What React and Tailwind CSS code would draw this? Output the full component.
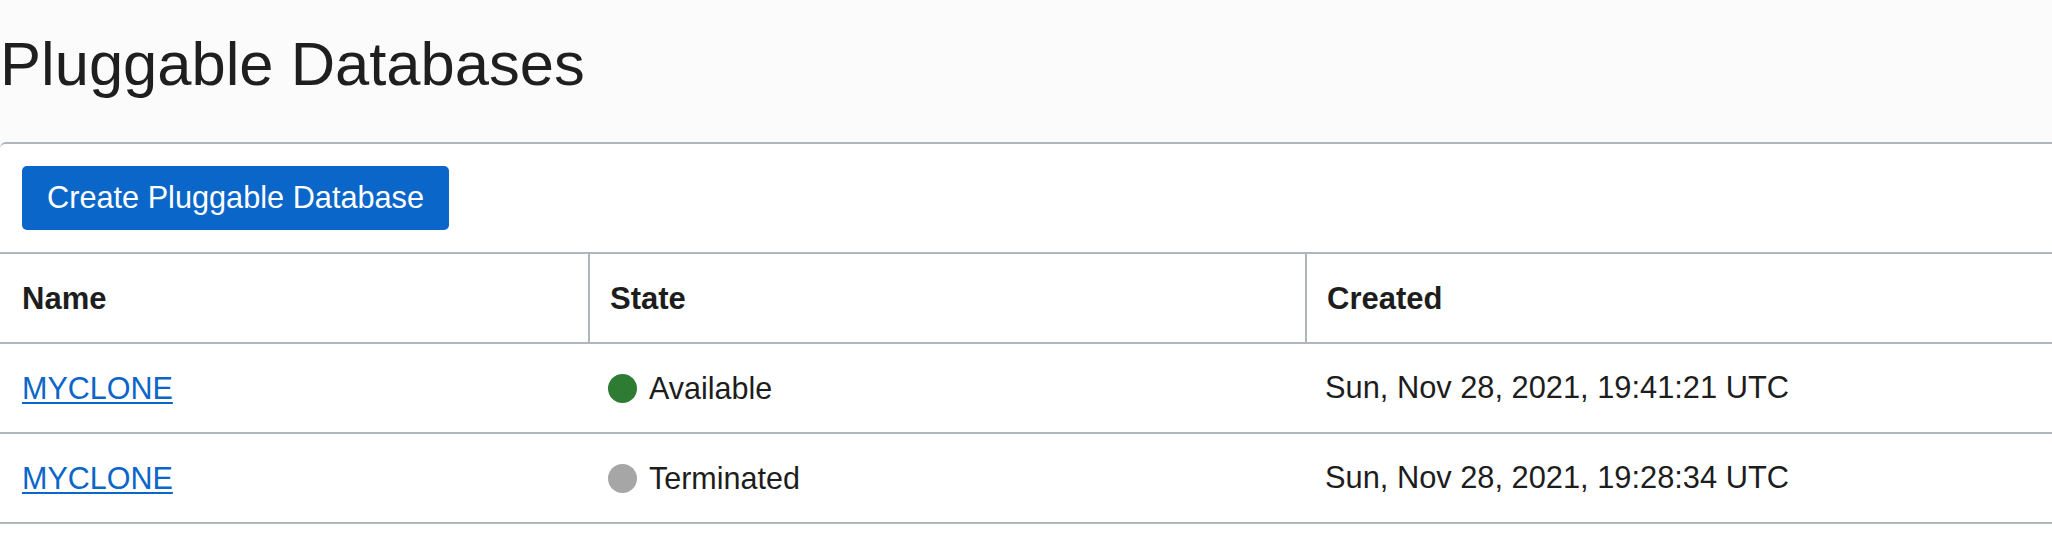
import React from "react";

const rows = [
  { name: "MYCLONE", state: "Available", dot: "bg-[#2e7b34]", created: "Sun, Nov 28, 2021, 19:41:21 UTC" },
  { name: "MYCLONE", state: "Terminated", dot: "bg-[#a6a6a6]", created: "Sun, Nov 28, 2021, 19:28:34 UTC" },
];

export default function App() {
  return (
    <div className="w-[2052px] h-[536px] overflow-hidden bg-[#fbfbfb] text-[#1d1d1d] font-['Liberation_Sans',Arial,sans-serif]">
      <div className="h-[142px] pt-[33px]">
        <h1 className="text-[61.5px] leading-none font-normal text-[#1f1f1f]">Pluggable Databases</h1>
      </div>
      <div className="bg-white border-t-2 border-[#b0b5bd] rounded-tl-[6px] h-[394px]">
        <div className="pt-[22px] pb-[22px] pl-[22px]">
          <button className="h-[64px] px-[25px] rounded-[5px] bg-[#0b66c9] text-white text-[30.7px] leading-none">
            Create Pluggable Database
          </button>
        </div>
        <div className="border-t-2 border-[#b0b5bd]">
          <div className="grid grid-cols-[588px_717px_1fr] h-[88px] items-stretch text-[31px] font-bold leading-none">
            <div className="flex items-center pl-[22px]">Name</div>
            <div className="flex items-center pl-[20px] border-l-2 border-[#b0b5bd]">State</div>
            <div className="flex items-center pl-[20px] border-l-2 border-[#b0b5bd]">Created</div>
          </div>
          {rows.map((r, i) => (
            <div key={i} className="grid grid-cols-[588px_717px_1fr] h-[90px] items-center border-t-2 border-[#b0b5bd] text-[30.5px] leading-none">
              <div className="pl-[22px]">
                <a href="#" className="text-[#0b66c9] underline decoration-2 underline-offset-[3px]">{r.name}</a>
              </div>
              <div className="pl-[20px] flex items-center gap-[12px]">
                <span className={`w-[29px] h-[29px] rounded-full ${r.dot}`}></span>
                <span>{r.state}</span>
              </div>
              <div className="pl-[20px] text-[30.8px]">{r.created}</div>
            </div>
          ))}
          <div className="border-t-2 border-[#b0b5bd]"></div>
        </div>
      </div>
    </div>
  );
}
